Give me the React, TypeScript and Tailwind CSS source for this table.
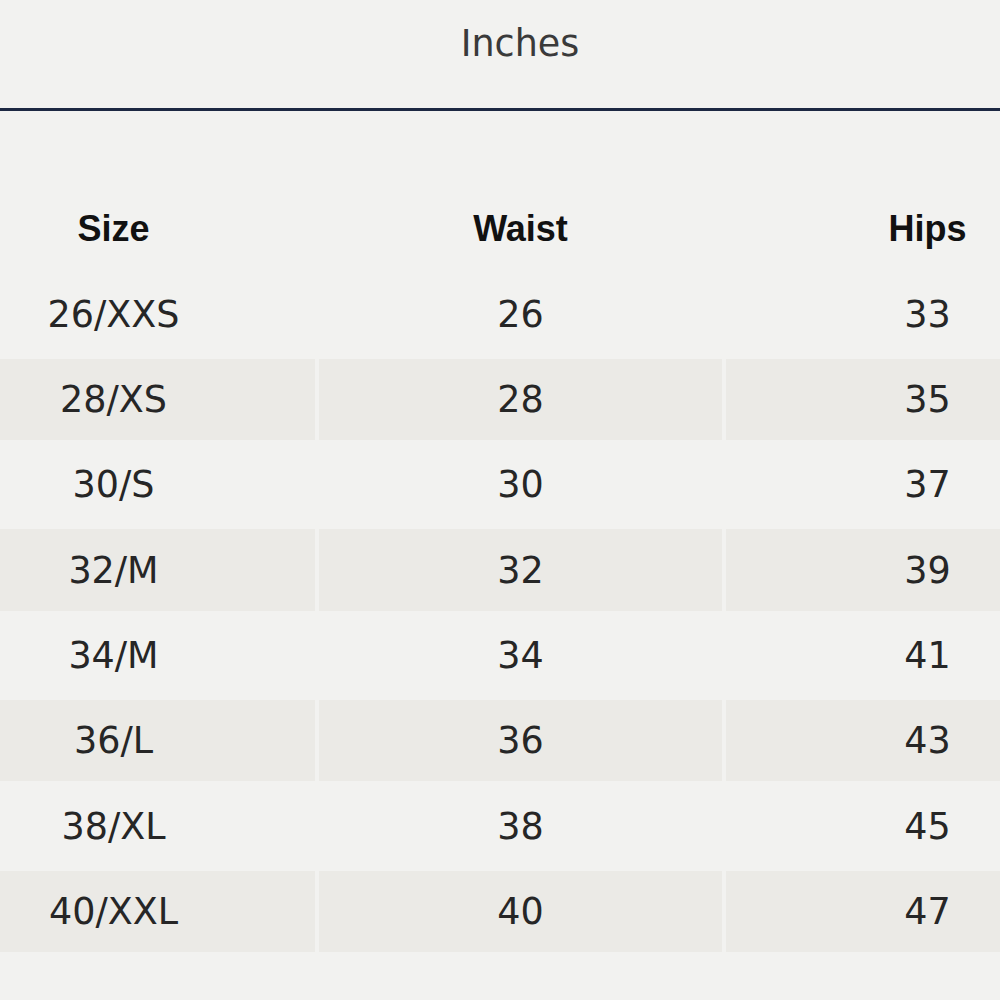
const rows = [
  ["26/XXS", "26", "33"],
  ["28/XS", "28", "35"],
  ["30/S", "30", "37"],
  ["32/M", "32", "39"],
  ["34/M", "34", "41"],
  ["36/L", "36", "43"],
  ["38/XL", "38", "45"],
  ["40/XXL", "40", "47"],
];

const headers = ["Size", "Waist", "Hips"];

export default function App() {
  return (
    <div className="min-h-screen w-full overflow-hidden bg-[#f2f2f0]">
      {/* Unit tab */}
      <div className="flex h-[108px] items-start justify-center pt-[23px] pl-[40px]">
        <span className="font-['DejaVu_Sans',sans-serif] text-[36.5px] leading-[42px] text-[#3a3a3a]">
          Inches
        </span>
      </div>
      <div className="h-[3px] w-full bg-[#1d2842]" />

      {/* Size table */}
      <div className="mt-[77px] ml-[-88px] grid w-[1217px] grid-cols-[403px_403px_403px] auto-rows-[81.33px] gap-x-[4px] gap-y-[4px]">
        {headers.map((h) => (
          <div
            key={h}
            className="flex items-center justify-center font-['Liberation_Sans',Arial,sans-serif] text-[36px] font-bold leading-none text-[#111111]"
          >
            {h}
          </div>
        ))}
        {rows.map((row, i) =>
          row.map((cell, j) => (
            <div
              key={`${i}-${j}`}
              className={
                "flex items-center justify-center pt-[2px] font-['DejaVu_Sans',sans-serif] text-[36.5px] leading-none text-[#262626] " +
                (i % 2 === 1 ? "bg-[#ebeae6]" : "")
              }
            >
              {cell}
            </div>
          ))
        )}
      </div>
    </div>
  );
}
